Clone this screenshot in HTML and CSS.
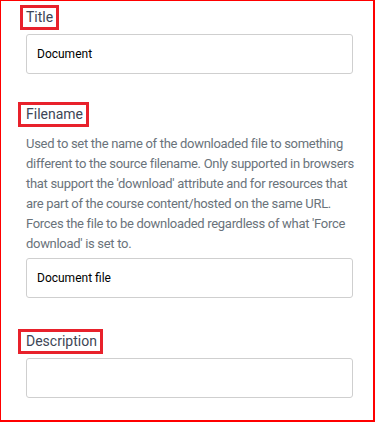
FILE: index.html
```html
<!DOCTYPE html>
<html lang="en">
<head>
  <meta charset="UTF-8" />
  <title>Edit file resource</title>
  <meta name="viewport" content="width=device-width, initial-scale=1.0" />
  <link rel="stylesheet" href="styles.css">
</head>
<body>
  <div class="frame">
    <div class="field">
      <label class="mark mark-first" for="title">Title</label>
      <input class="input" id="title" type="text" value="Document">
    </div>

    <div class="field field-filename">
      <label class="mark" for="filename">Filename</label>
      <p class="help">Used to set the name of the downloaded file to something<br>
        different to the source filename. Only supported in browsers<br>
        that support the 'download' attribute and for resources that<br>
        are part of the course content/hosted on the same URL.<br>
        Forces the file to be downloaded regardless of what 'Force<br>
        download' is set to.</p>
      <input class="input" id="filename" type="text" value="Document file">
    </div>

    <div class="field field-description">
      <label class="mark" for="description">Description</label>
      <input class="input" id="description" type="text" value="">
    </div>
  </div>
</body>
</html>
```
FILE: styles.css
```css
* {
  box-sizing: border-box;
}

body {
  margin: 0;
  font-family: 'Roboto', sans-serif;
  background: #fff;
}

.frame {
  width: 375px;
  height: 422px;
  border: solid #f00;
  border-width: 1px 2px 2px 1px;
  padding: 4px 20px 0 25px;
}

.field {
  display: flex;
  flex-direction: column;
  align-items: flex-start;
}

.field-filename {
  margin-top: 28px;
}

.field-description {
  margin-top: 31px;
}

/* red highlight boxes round the labels */
.mark {
  display: inline-block;
  margin: 0 0 4px -8px;
  padding: 0 3px 0 5px;
  border: 3px solid #e8212b;
  color: #3d4656;
  font-size: 14px;
  line-height: 19px;
}

.mark-first {
  margin-left: -6px;
  padding-left: 3px;
}

.field-filename .mark {
  margin-bottom: 7px;
}

.help {
  margin: 0 0 4px;
  color: #6a737b;
  font-size: 13px;
  line-height: 20px;
  letter-spacing: -0.3px;
  white-space: nowrap;
}

.input {
  width: 100%;
  height: 40px;
  padding: 0 10px 0 10px;
  border: 1px solid #cfcfcf;
  border-radius: 3px;
  font-family: 'Roboto', sans-serif;
  font-size: 12px;
  color: #000;
  background: #fff;
}
```
